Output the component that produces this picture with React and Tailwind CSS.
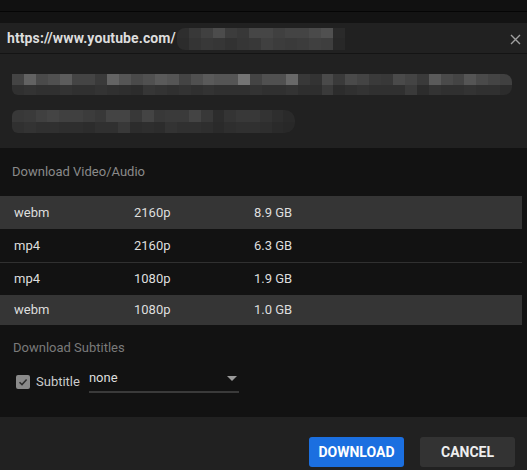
import React from "react";

const headTop = ["2e", "38", "40", "4c", "3c", "38", "46", "46", "40", "44", "44", "4a", "50", "2a"];
const headBot = ["2c", "34", "38", "36", "32", "36", "38", "40", "3c", "3a", "3c", "40", "3e", "28"];

const line1Top = ["44", "62", "4a", "50", "5c", "44", "44", "3a", "64", "55", "4a", "50", "5a", "55", "44", "50", "5a", "55", "55", "74", "44", "50", "50", "68", "38", "33", "4a", "3a", "4a", "44", "3a", "38", "4a", "44", "3a", "5a", "4a", "44", "55", "4a", "44", "40"];
const line1Bot = ["30", "33", "30", "30", "33", "30", "30", "33", "30", "2e", "2c", "36", "33", "30", "33", "30", "33", "30", "30", "30", "33", "30", "30", "33", "2e", "2e", "3a", "2c", "30", "33", "30", "30", "30", "3a", "2c", "33", "30", "30", "33", "30", "30", "2c"];
const line2Top = ["38", "3a", "40", "44", "40", "40", "3c", "38", "44", "44", "38", "44", "38", "3a", "3a", "44", "38", "2c", "34", "38", "38", "33", "2e", "2a"];
const line2Bot = ["30", "33", "30", "30", "2e", "2e", "2c", "30", "30", "38", "2c", "2e", "2c", "33", "30", "30", "2e", "2a", "2e", "30", "30", "2e", "2a", "28"];

const formats = [
  { ext: "webm", res: "2160p", size: "8.9 GB", hl: true },
  { ext: "mp4", res: "2160p", size: "6.3 GB" },
  { ext: "mp4", res: "1080p", size: "1.9 GB", border: true },
  { ext: "webm", res: "1080p", size: "1.0 GB", hl: true, short: true },
];

const Pixels = ({ top, bot, block = 12, topH = 11, botH = 10, className = "" }) => (
  <div className={`flex flex-col overflow-hidden ${className}`}>
    <div className="flex">
      {top.map((g, i) => (
        <div
          key={i}
          style={{ width: block, height: topH, backgroundColor: `#${g}${g}${g}` }}
        />
      ))}
    </div>
    <div className="flex">
      {bot.map((g, i) => (
        <div
          key={i}
          style={{ width: block, height: botH, backgroundColor: `#${g}${g}${g}` }}
        />
      ))}
    </div>
  </div>
);

export default function App() {
  return (
    <div
      className="w-[527px] h-[470px] overflow-hidden bg-[#111111] flex flex-col"
      style={{ fontFamily: "Roboto, 'Liberation Sans', sans-serif" }}
    >
      {/* page behind the dialog */}
      <div className="h-[11px] bg-[#111111]" />
      <div className="h-px bg-[#050505]" />
      <div className="h-[11px] bg-[#131313]" />

      {/* dialog */}
      <div className="flex-1 flex flex-col bg-[#121212]">
        {/* header */}
        <div className="h-[31px] shrink-0 bg-[#212121] border-b border-[#141414] flex items-center pl-[7px] pr-[6px]">
          <span className="text-[14px] font-bold text-[#dddddd] tracking-[0.1px]">
            https://www.youtube.com/
          </span>
          <Pixels
            top={headTop}
            bot={headBot}
            topH={10}
            botH={12}
            className="rounded-l-[8px] ml-px mt-px"
          />
          <div className="flex-1" />
          <svg width="11" height="11" viewBox="0 0 11 11" className="mt-[2px]">
            <path d="M1 1L10 10M10 1L1 10" stroke="#a0a0a0" strokeWidth="1.4" />
          </svg>
        </div>

        {/* title (blurred) */}
        <div className="h-[94px] shrink-0 bg-[#212121] pl-[12px] pt-[20px] flex flex-col gap-[15px]">
          <Pixels top={line1Top} bot={line1Bot} className="w-[500px] rounded-bl-[6px] rounded-r-[8px]" />
          <Pixels
            top={line2Top}
            bot={line2Bot}
            topH={12}
            botH={11}
            className="w-[283px] rounded-l-[6px] rounded-r-[10px]"
          />
        </div>

        {/* body */}
        <div className="flex-1 flex flex-col">
          <div className="pl-[12px] pt-[14px] h-[48px] text-[13px] text-[#8a8a8a] leading-[20px]">
            Download Video/Audio
          </div>
          <div className="flex flex-col mr-[5px]">
            {formats.map((f, i) => (
              <div
                key={i}
                className={`flex items-center text-[13px] text-[#dedede] ${
                  f.short ? "h-[30px]" : "h-[33px]"
                } ${f.hl ? "bg-[#353535]" : ""} ${
                  f.border ? "border-t border-[#303030]" : ""
                }`}
              >
                <span className="w-[134px] pl-[14px]">{f.ext}</span>
                <span className="w-[120px]">{f.res}</span>
                <span>{f.size}</span>
              </div>
            ))}
          </div>

          <div className="pl-[13px] pt-[13px] text-[13px] text-[#7a7a7a] leading-[20px]">
            Download Subtitles
          </div>
          <div className="flex items-end pl-[16px] mt-[12px] h-[23px]">
            <div className="w-[14px] h-[14px] rounded-[2px] bg-[#8a8a8a] flex items-center justify-center mb-[4px]">
              <svg width="10" height="10" viewBox="0 0 10 10">
                <path d="M1.5 5.2L4 7.6L8.6 2.4" stroke="#2e2e2e" strokeWidth="1.5" fill="none" />
              </svg>
            </div>
            <span className="ml-[6px] text-[13px] text-[#cccccc] mb-[2px]">Subtitle</span>
            <div className="ml-[9px] w-[150px] h-[23px] border-b-2 border-[#3a3a3a] flex items-start justify-between">
              <span className="text-[13px] text-[#dddddd] leading-[16px]">none</span>
              <svg width="10" height="6" viewBox="0 0 10 6" className="mt-[6px] mr-[2px]">
                <path d="M0 0H10L5 5Z" fill="#9a9a9a" />
              </svg>
            </div>
          </div>

          <div className="flex-1" />

          {/* footer */}
          <div className="h-[53px] shrink-0 bg-[#212121] flex justify-end items-start pt-[20px] pr-[12px] gap-[16px]">
            <button className="w-[95px] h-[30px] rounded-[3px] bg-[#1b6fe0] text-white text-[14px] font-bold">
              DOWNLOAD
            </button>
            <button className="w-[95px] h-[30px] rounded-[3px] bg-[#333333] text-[#eeeeee] text-[14px] font-bold">
              CANCEL
            </button>
          </div>
        </div>
      </div>
    </div>
  );
}
